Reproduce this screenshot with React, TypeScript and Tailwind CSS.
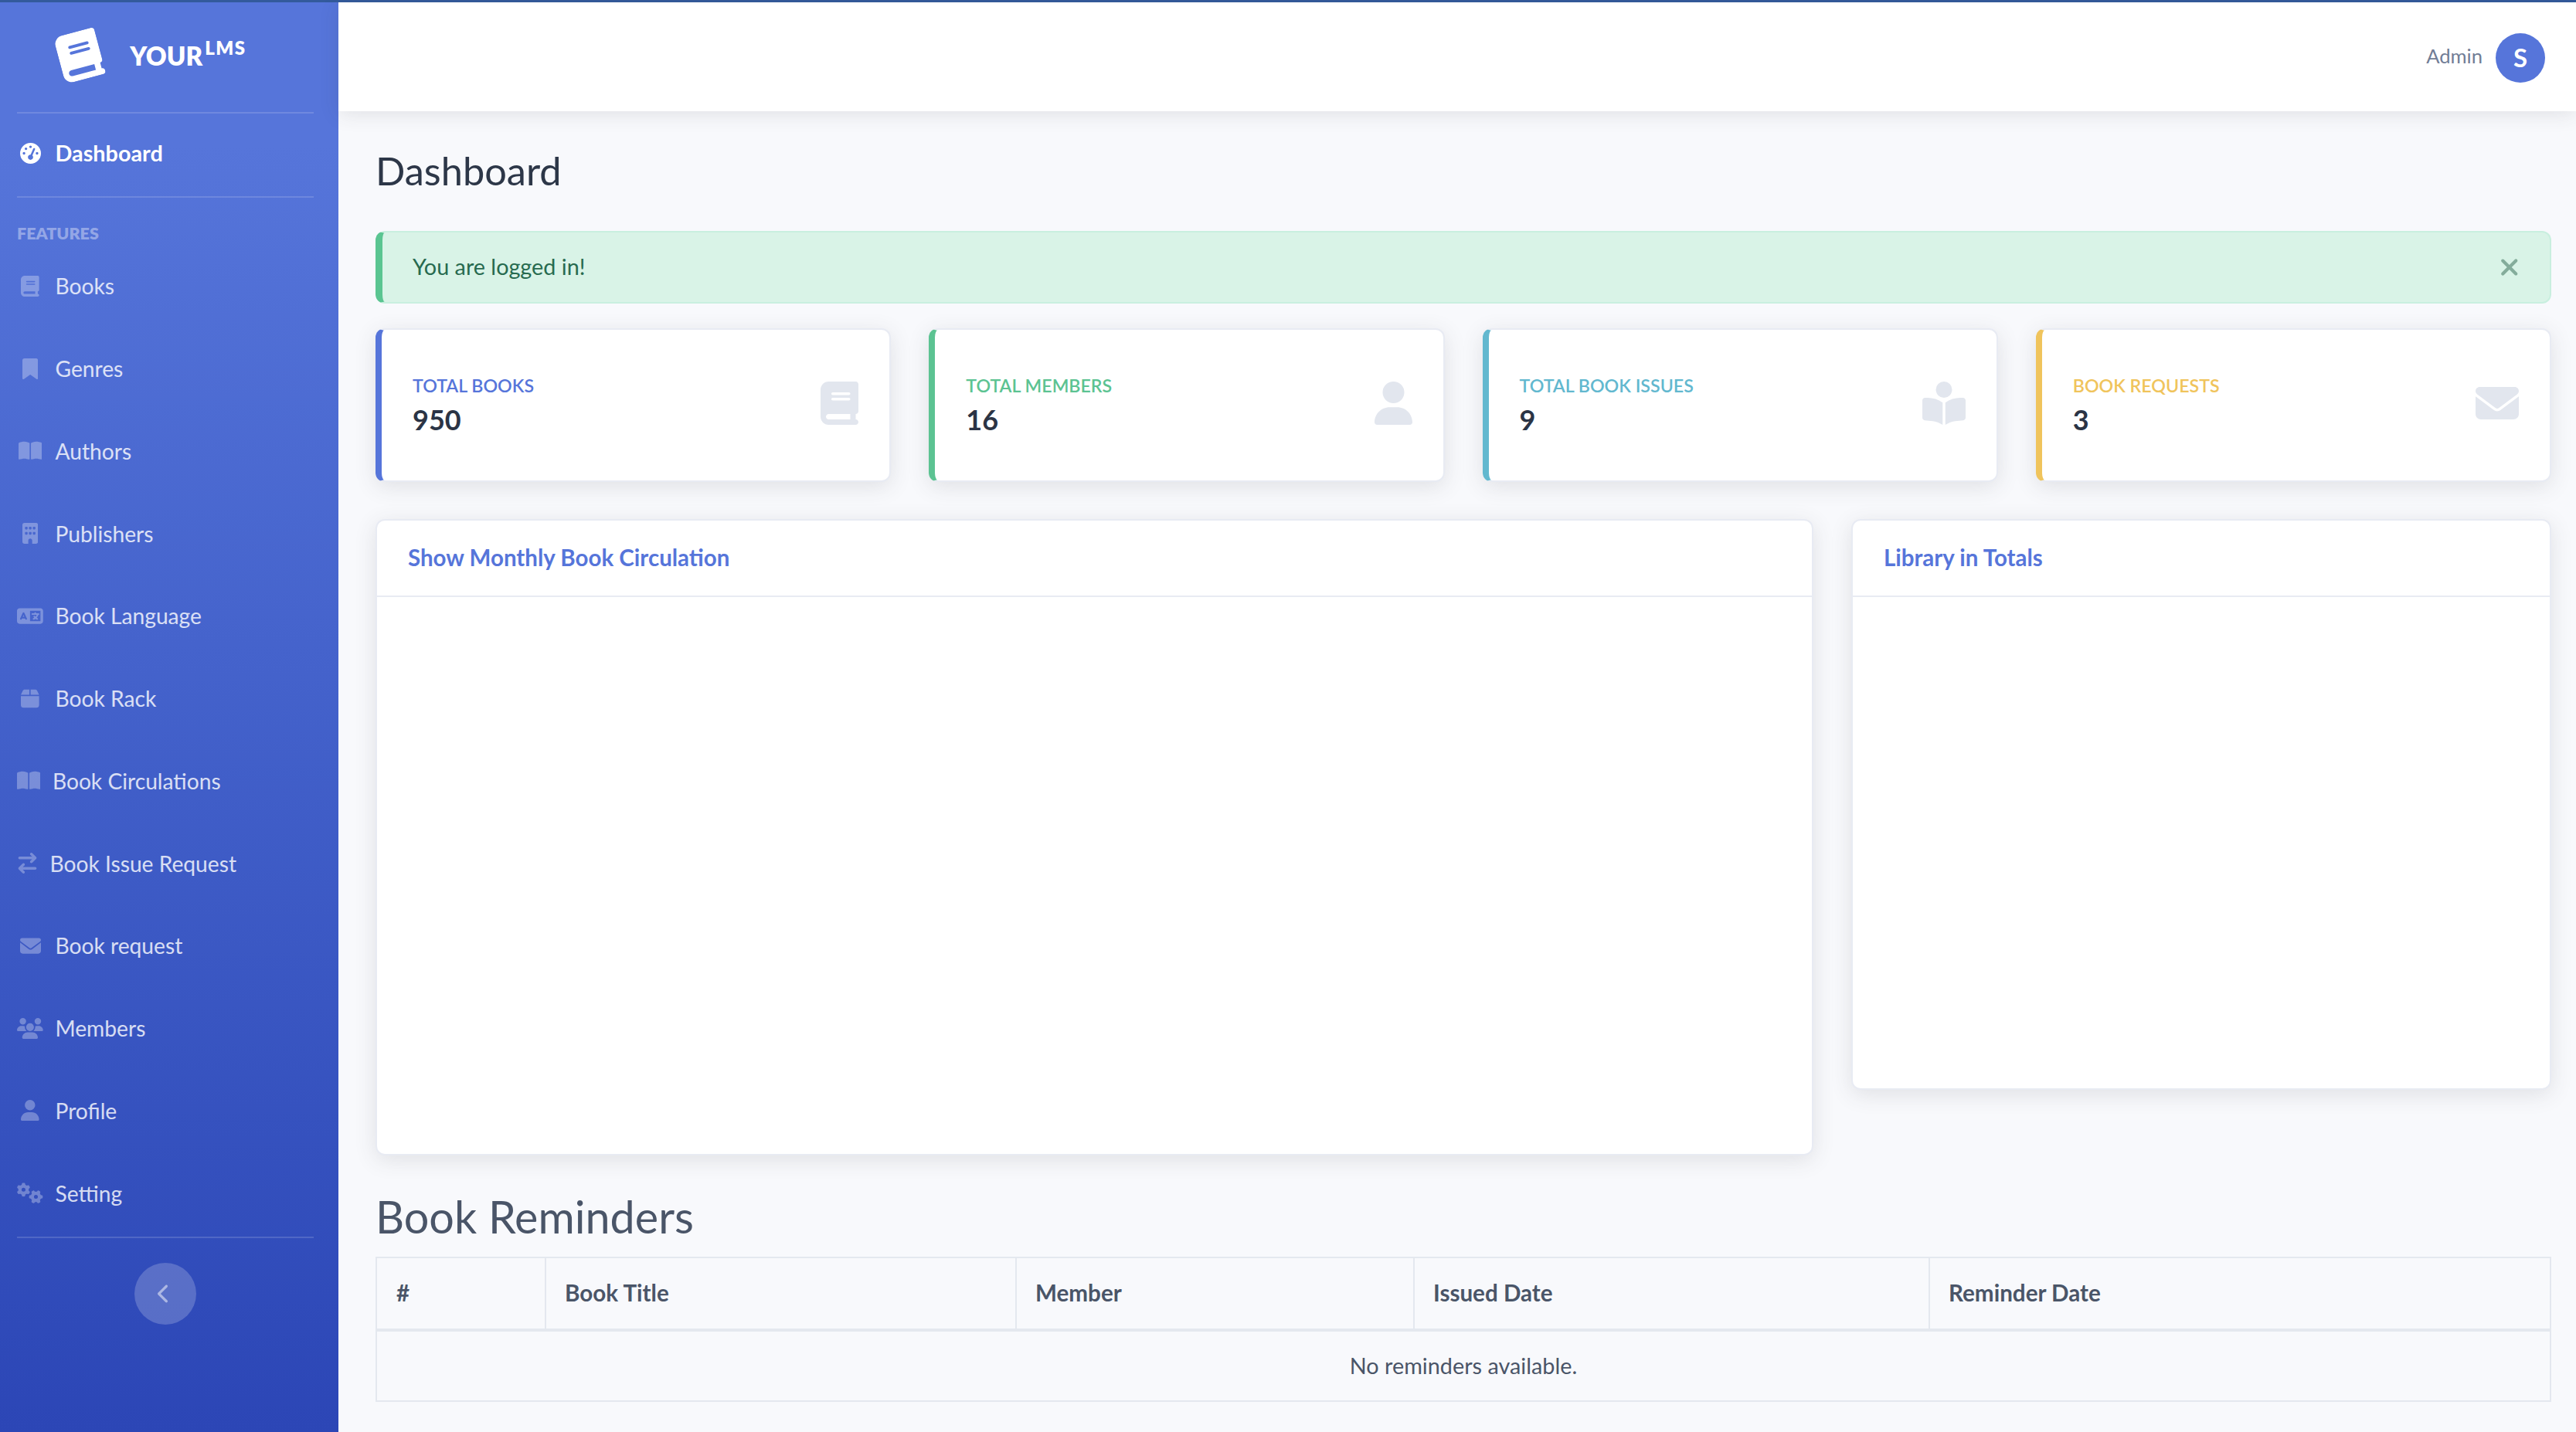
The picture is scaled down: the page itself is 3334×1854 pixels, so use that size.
import {
  FaArrowRightArrowLeft,
  FaBook,
  FaBookmark,
  FaBookOpen,
  FaBookOpenReader,
  FaBox,
  FaBuilding,
  FaChevronLeft,
  FaEnvelope,
  FaGaugeHigh,
  FaGears,
  FaLanguage,
  FaUser,
  FaUsers,
  FaXmark,
} from "react-icons/fa6";

const navItems = [
  { label: "Books", icon: FaBook, width: "w-[23.6px]" },
  { label: "Genres", icon: FaBookmark, width: "w-[20.25px]" },
  { label: "Authors", icon: FaBookOpen, width: "w-[30.4px]" },
  { label: "Publishers", icon: FaBuilding, width: "w-[20.25px]" },
  { label: "Book Language", icon: FaLanguage, width: "w-[33.75px]" },
  { label: "Book Rack", icon: FaBox, width: "w-[23.6px]" },
  { label: "Book Circulations", icon: FaBookOpen, width: "w-[30.4px]", auto: true },
  { label: "Book Issue Request", icon: FaArrowRightArrowLeft, width: "w-[27px]", auto: true },
  { label: "Book request", icon: FaEnvelope, width: "w-[27px]" },
  { label: "Members", icon: FaUsers, width: "w-[33.75px]" },
  { label: "Profile", icon: FaUser, width: "w-[23.6px]" },
  { label: "Setting", icon: FaGears, width: "w-[33.75px]" },
];

const stats = [
  { label: "TOTAL BOOKS", value: "950", icon: FaBook, width: "w-[49px]", border: "border-l-[#5675da]", text: "text-[#5675da]" },
  { label: "TOTAL MEMBERS", value: "16", icon: FaUser, width: "w-[49px]", border: "border-l-[#5cc392]", text: "text-[#5cc392]" },
  { label: "TOTAL BOOK ISSUES", value: "9", icon: FaBookOpenReader, width: "w-[56px]", border: "border-l-[#62b8cf]", text: "text-[#62b8cf]" },
  { label: "BOOK REQUESTS", value: "3", icon: FaEnvelope, width: "w-[56px]", border: "border-l-[#f0c45c]", text: "text-[#f0c45c]" },
];

function Sidebar() {
  return (
    <aside className="flex w-[438px] shrink-0 flex-col bg-gradient-to-b from-[#5675da] from-10% to-[#2c46b6] pr-[32px] pl-[22px]">
      {/* Brand */}
      <div className="flex h-[142px] shrink-0 items-center pb-[4px] pl-[54px]">
        <FaBook className="h-[62px] w-[54.25px] -rotate-15 text-white" />
        <div className="ml-[38px] flex items-start text-white">
          <span className="text-[33px] leading-none font-extrabold">YOUR</span>
          <span className="-mt-[6px] ml-[3px] text-[24px] leading-none font-extrabold tracking-[1.5px]">LMS</span>
        </div>
      </div>
      <div className="h-[2px] shrink-0 bg-white/15" />
      <div className="flex h-[107px] shrink-0 items-center pb-[4px] font-bold text-white">
        <span className="flex w-[34px] justify-center">
          <FaGaugeHigh className="size-[27px]" />
        </span>
        <span className="ml-[15.5px] text-[28.8px] leading-none">Dashboard</span>
      </div>
      <div className="h-[2px] shrink-0 bg-white/15" />
      <div className="flex h-[61px] shrink-0 items-end text-[21.5px] leading-[30px] font-extrabold text-white/40">FEATURES</div>

      <nav className="flex flex-col">
        {navItems.map((item) => (
          <div key={item.label} className="flex h-[106.75px] items-center text-[28.2px] text-white/80">
            {item.auto ? (
              <item.icon className={`h-[27px] shrink-0 text-white/30 ${item.width}`} />
            ) : (
              <span className="flex w-[34px] shrink-0 justify-center">
                <item.icon className={`h-[27px] shrink-0 text-white/30 ${item.width}`} />
              </span>
            )}
            <span className="ml-[15.5px] leading-none">{item.label}</span>
          </div>
        ))}
      </nav>

      <div className="mt-[3px] h-[2px] shrink-0 bg-white/15" />
      <div className="mt-[32px] flex justify-center">
        <button className="flex size-[80px] items-center justify-center rounded-full bg-white/20 pr-[4px] text-white/50">
          <FaChevronLeft className="h-[26px] w-[16.25px]" />
        </button>
      </div>
    </aside>
  );
}

function Header() {
  return (
    <header className="flex h-[141px] shrink-0 items-center justify-end bg-white pt-[2px] pr-[40px] shadow-[0_4px_24px_rgba(58,59,69,0.12)]">
      <span className="pb-[4px] text-[25.6px] text-[#717d96]">Admin</span>
      <span className="ml-[17px] flex size-[64px] items-center justify-center rounded-full bg-[#5675da] text-[33px] font-bold text-white">S</span>
    </header>
  );
}

function ChartCard({ title, className }: { title: string; className: string }) {
  return (
    <div className={`rounded-[12px] border-2 border-[#e8ebf3] bg-white shadow-[0_6px_28px_rgba(58,59,69,0.13)] ${className}`}>
      <div className="flex h-[99px] items-center border-b-2 border-[#e8ebf3] pl-[40px] text-[29.5px] font-bold text-[#5675da]">{title}</div>
    </div>
  );
}

export default function App() {
  return (
    <div className="flex h-[1854px] w-[3334px] flex-col overflow-hidden bg-[#f8f9fc] [font-family:Lato,sans-serif]">
      <div className="h-[3px] shrink-0 bg-[#335a9c]" />
      <div className="flex min-h-0 flex-1">
        <Sidebar />
        <div className="flex min-w-0 flex-1 flex-col">
          <Header />
          <main className="flex flex-col pt-[42px] pr-[32px] pl-[48px]">
            <h1 className="text-[50.5px] leading-[70px] text-[#2d3748]">Dashboard</h1>

            <div className="mt-[43px] flex h-[94px] items-center justify-between rounded-[12px] border-2 border-l-[9px] border-[#c9efdf] border-l-[#5ac591] bg-[#d9f3e7] pr-[40px] pl-[39px] text-[28.8px] text-[#276a4f]">
              <span>You are logged in!</span>
              <FaXmark className="h-[34px] w-[25.5px] text-[#84ac9b]" />
            </div>

            <div className="mt-[32px] grid grid-cols-4 gap-[49px]">
              {stats.map((s) => (
                <div
                  key={s.label}
                  className={`flex h-[199px] items-center justify-between rounded-[12px] border-2 border-l-[8px] border-[#e8ebf3] bg-white pr-[40px] pb-[2px] pl-[40px] shadow-[0_6px_28px_rgba(58,59,69,0.13)] ${s.border}`}
                >
                  <div className="flex flex-col">
                    <span className={`text-[23.2px] leading-[32px] font-semibold ${s.text}`}>{s.label}</span>
                    <span className="mt-[6px] text-[36px] leading-[44px] font-bold text-[#2b3445]">{s.value}</span>
                  </div>
                  <s.icon className={`-mt-[4px] h-[56px] ${s.width} text-[#e2e6ee]`} />
                </div>
              ))}
            </div>

            <div className="mt-[48px] grid grid-cols-[1861px_1fr] items-start gap-[49px]">
              <ChartCard title="Show Monthly Book Circulation" className="h-[824px]" />
              <ChartCard title="Library in Totals" className="h-[739px]" />
            </div>

            <h2 className="mt-[45px] text-[57.5px] leading-[68px] text-[#4a5568]">Book Reminders</h2>

            <table className="mt-[18px] w-full table-fixed border-collapse border-2 border-[#e4e8ef] text-[28.8px] text-[#4a5568]">
              <thead>
                <tr className="h-[94px] border-b-4 border-[#e4e8ef] text-left text-[29.6px] font-bold">
                  <th className="w-[219px] border-r-2 border-[#e4e8ef] pl-[25px]">#</th>
                  <th className="w-[609px] border-r-2 border-[#e4e8ef] pl-[24px]">Book Title</th>
                  <th className="w-[515px] border-r-2 border-[#e4e8ef] pl-[24px]">Member</th>
                  <th className="w-[667px] border-r-2 border-[#e4e8ef] pl-[24px]">Issued Date</th>
                  <th className="pl-[24px]">Reminder Date</th>
                </tr>
              </thead>
              <tbody>
                <tr className="h-[92px]">
                  <td colSpan={5} className="text-center">No reminders available.</td>
                </tr>
              </tbody>
            </table>
          </main>
        </div>
      </div>
    </div>
  );
}
